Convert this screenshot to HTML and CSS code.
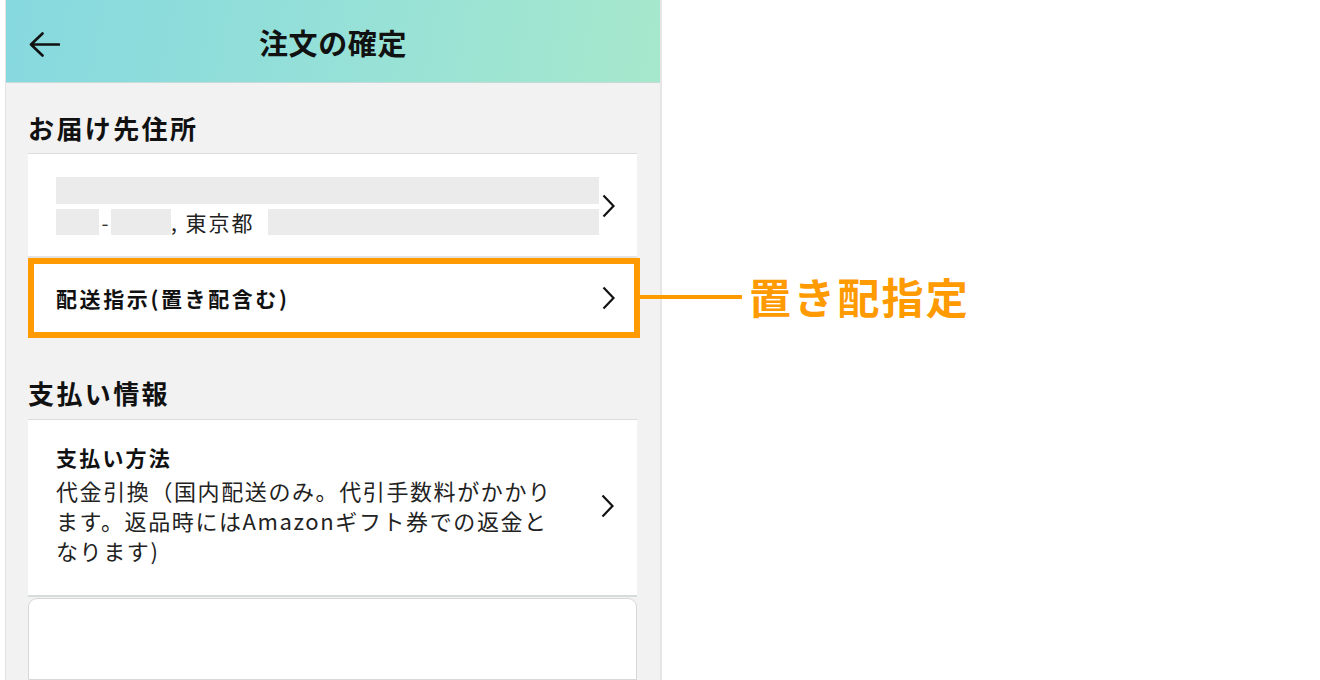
FILE: index.html
```html
<!DOCTYPE html>
<html lang="ja">
<head>
<meta charset="utf-8">
<title>注文の確定</title>
<link rel="stylesheet" href="styles.css">
</head>
<body>
<div class="stage">
  <div class="phone">
    <header class="topbar">
      <svg class="back" width="31" height="25" viewBox="0 0 31 25"><path d="M2 12.5 H30 M13.5 1.5 L2 12.5 L13.5 23.5" fill="none" stroke="#111" stroke-width="2.6" stroke-linecap="round" stroke-linejoin="round"/></svg>
      <h1 class="title">注文の確定</h1>
    </header>
    <h2 class="sec-head sec-first">お届け先住所</h2>
    <div class="card addr-card">
      <div class="addr-row">
        <div class="addr-lines">
          <div class="bar bar-full"></div>
          <div class="addr-line2">
            <span class="bar bar-a"></span><span class="dash">-</span><span class="bar bar-b"></span><span class="city">, 東京都</span><span class="bar bar-c"></span>
          </div>
        </div>
        <svg class="chev" width="13" height="24" viewBox="0 0 13 24"><path d="M1.5 1.5 L11.5 12 L1.5 22.5" fill="none" stroke="#111" stroke-width="2.2" stroke-linejoin="miter"/></svg>
      </div>
    </div>
    <div class="deliv-row">
      <span class="deliv-text">配送指示(置き配含む)</span>
      <svg class="chev" width="13" height="24" viewBox="0 0 13 24"><path d="M1.5 1.5 L11.5 12 L1.5 22.5" fill="none" stroke="#111" stroke-width="2.2"/></svg>
    </div>
    <h2 class="sec-head sec-second">支払い情報</h2>
    <div class="card pay-card">
      <div class="pay-body">
        <div class="pay-title">支払い方法</div>
        <div class="pay-text">代金引換（国内配送のみ。代引手数料がかかり<br>ます。返品時にはAmazonギフト券での返金と<br>なります)</div>
      </div>
      <svg class="chev" width="13" height="24" viewBox="0 0 13 24"><path d="M1.5 1.5 L11.5 12 L1.5 22.5" fill="none" stroke="#111" stroke-width="2.2"/></svg>
    </div>
    <div class="card next-card"></div>
  </div>
  <div class="callout-line"></div>
  <div class="callout-label">置き配指定</div>
</div>
</body>
</html>
```

FILE: styles.css
```css
* { box-sizing: border-box; }
html, body {
  margin: 0;
  padding: 0;
  background: #ffffff;
}
body {
  font-family: "Noto Sans CJK JP", "Noto Sans", sans-serif;
  color: #111;
  width: 1320px;
  height: 680px;
  overflow: hidden;
}
.stage {
  position: relative;
  display: flex;
  align-items: flex-start;
  height: 680px;
}
.phone {
  margin-left: 5px;
  width: 657px;
  height: 680px;
  background: #f2f2f2;
  border-left: 1px solid #e2e2e2;
  border-right: 2px solid #e6e6e6;
  overflow: hidden;
  display: flex;
  flex-direction: column;
}
.topbar {
  height: 83px;
  flex: none;
  display: flex;
  align-items: center;
  position: relative;
  background: linear-gradient(100deg, #86d9df 0%, #95e0d8 50%, #a6e8cc 100%);
  border-bottom: 1px solid #c6d9d6;
}
.back {
  position: absolute;
  left: 23px;
  top: 32px;
}
.title {
  margin: 0 auto;
  padding-top: 2px;
  font-size: 29px;
  font-weight: 700;
  letter-spacing: 0.6px;
  line-height: 40px;
  color: #111;
}
.sec-head {
  margin: 0;
  padding-left: 22px;
  font-size: 26px;
  font-weight: 700;
  letter-spacing: 2.4px;
  line-height: 36px;
  color: #111;
}
.sec-first { margin-top: 27px; margin-bottom: 7px; }
.sec-second { margin-top: 37px; margin-bottom: 8px; }
.card {
  margin: 0 23px 0 22px;
  background: #fff;
  border-top: 1px solid #dcdcdc;
}
.addr-card {
  border-bottom: 2px solid #e3e3e3;
}
.addr-row {
  display: flex;
  align-items: center;
  padding: 23px 23px 21px 28px;
}
.addr-lines {
  width: 543px;
  display: flex;
  flex-direction: column;
  gap: 5px;
}
.bar {
  display: block;
  background: #ebebeb;
  height: 27px;
}
.addr-line2 {
  display: flex;
  align-items: center;
  height: 26px;
}
.addr-line2 .bar { height: 26px; }
.bar-a { width: 43px; }
.bar-b { width: 60px; }
.bar-c { width: 331px; margin-left: 10px; }
.dash {
  width: 12px;
  text-align: center;
  font-size: 20px;
  color: #333;
}
.city {
  font-size: 21px;
  letter-spacing: 2px;
  color: #222;
  line-height: 26px;
  width: 87px;
  white-space: nowrap;
}
.chev {
  flex: none;
  margin-left: auto;
}
.addr-row .chev { margin-left: 3px; }
.deliv-row {
  margin: 0 20px 0 22px;
  height: 80px;
  background: #fff;
  border: 6px solid #ff9a00;
  display: flex;
  align-items: center;
  padding: 0 19px 0 22px;
}
.deliv-text {
  font-size: 21px;
  font-weight: 700;
  letter-spacing: 2.6px;
  color: #111;
}
.pay-card {
  display: flex;
  align-items: center;
  padding: 22px 23px 30px 28px;
  border-bottom: 2px solid #d6dcdc;
}
.pay-title {
  font-size: 21px;
  font-weight: 700;
  letter-spacing: 2.2px;
  line-height: 30px;
  color: #111;
}
.pay-text {
  margin-top: 3px;
  font-size: 22px;
  letter-spacing: 1.6px;
  line-height: 30px;
  color: #222;
}
.pay-card .chev { margin-top: 4px; }
.next-card {
  margin-top: 1px;
  flex: 1;
  border: 1px solid #d7d7d7;
  border-radius: 9px 9px 0 0;
}
.callout-line {
  position: absolute;
  left: 640px;
  top: 295px;
  width: 102px;
  height: 4px;
  background: #ff9a00;
}
.callout-label {
  position: absolute;
  left: 749px;
  top: 268px;
  font-size: 42px;
  font-weight: 700;
  letter-spacing: 2.2px;
  line-height: 56px;
  color: #ff9a00;
}
```
